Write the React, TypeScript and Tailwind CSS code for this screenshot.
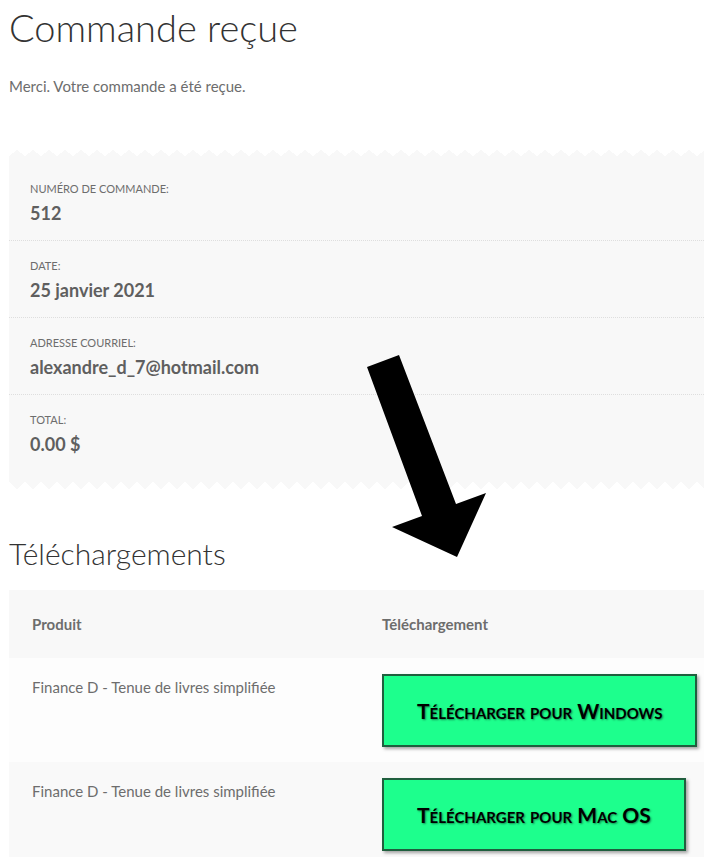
import { ReactElement } from 'react'

const font = { fontFamily: 'Lato, "Noto Sans", sans-serif' }

const overview = [
	{ label: 'Numéro de commande:', value: '512' },
	{ label: 'Date:', value: '25 janvier 2021' },
	{ label: 'Adresse courriel:', value: 'alexandre_d_7@hotmail.com' },
	{ label: 'Total:', value: '0.00 $' },
]

const downloads = [
	{ product: 'Finance D - Tenue de livres simplifiée', label: 'Télécharger pour Windows', bg: 'bg-[#fdfdfd]', pb: 'pb-[15px]' },
	{ product: 'Finance D - Tenue de livres simplifiée', label: 'Télécharger pour Mac OS', bg: 'bg-[#f9f9f9]', pb: 'pb-[6px]' },
]

const Arrow = (): ReactElement => (
	<svg
		className="absolute left-0 top-0 pointer-events-none"
		width="713"
		height="866"
		viewBox="0 0 713 866"
	>
		<polygon
			points="367,363 399,351 456,500 486,489 457,553 392,523 422,512"
			fill="#000"
		/>
	</svg>
)

const App = (): ReactElement => {
	const renderHeader = (
		<>
			<h1 className="mt-[4px] text-[38px] leading-[46px] font-light text-[#333]">
				Commande reçue
			</h1>
			<p className="mt-[24px] text-[15px] leading-6 text-[#6d6d6d]">
				Merci. Votre commande a été reçue.
			</p>
		</>
	)

	const renderOverview = (
		<div className="mt-[52px]">
			<div className="h-[6px] bg-repeat-x bg-[length:16px_6px] bg-[conic-gradient(from_127deg_at_50%_0,#f8f8f8_106deg,transparent_0)]"></div>
			<ul className="bg-[#f8f8f8] pt-[8px] pb-[11px]">
				{overview.map((item, i) => (
					<li
						key={item.label}
						className={`pl-[21px] pt-[15px] pb-[14px] ${
							i < overview.length - 1 ? 'border-b border-dotted border-[#dedede]' : ''
						}`}
					>
						<div className="text-[11px] leading-5 uppercase text-[#6d6d6d]">
							{item.label}
						</div>
						<div className="mt-[1px] text-[18px] leading-[26px] font-bold text-[#5f5f5f]">
							{item.value}
						</div>
					</li>
				))}
			</ul>
			<div className="h-[7px] bg-repeat-x bg-[length:16px_7px] bg-[conic-gradient(from_-49deg_at_50%_100%,#f8f8f8_98deg,transparent_0)]"></div>
		</div>
	)

	const renderDownloads = (
		<>
			<h2 className="mt-[46px] text-[30px] leading-9 font-light text-[#333]">
				Téléchargements
			</h2>
			<div className="mt-[19px]">
				<div className="grid grid-cols-[350px_1fr] bg-[#f8f8f8] text-[15px] leading-6 font-bold text-[#6d6d6d]">
					<div className="px-[23px] py-[22px]">Produit</div>
					<div className="px-[23px] py-[22px]">Téléchargement</div>
				</div>
				{downloads.map((row) => (
					<div
						key={row.label}
						className={`grid grid-cols-[350px_1fr] ${row.bg}`}
					>
						<div className="px-[23px] pt-4 text-[15px] leading-[26px] text-[#6d6d6d]">
							{row.product}
						</div>
						<div className={`pl-[23px] pt-4 ${row.pb}`}>
							<a
								className="inline-block whitespace-nowrap border-2 border-[#1f5f3e] bg-[#1dff8d] px-[33px] py-[22px] text-[21px] leading-[25px] font-bold text-black [font-variant:small-caps] [text-shadow:1px_1px_2px_rgba(0,0,0,0.45)] shadow-[2px_2px_3px_rgba(0,0,0,0.35)]"
								href="#"
							>
								{row.label}
							</a>
						</div>
					</div>
				))}
			</div>
		</>
	)

	return (
		<div className="relative min-h-[866px] bg-white px-[9px]" style={font}>
			{renderHeader}
			{renderOverview}
			{renderDownloads}
			<Arrow />
		</div>
	)
}

export default App
